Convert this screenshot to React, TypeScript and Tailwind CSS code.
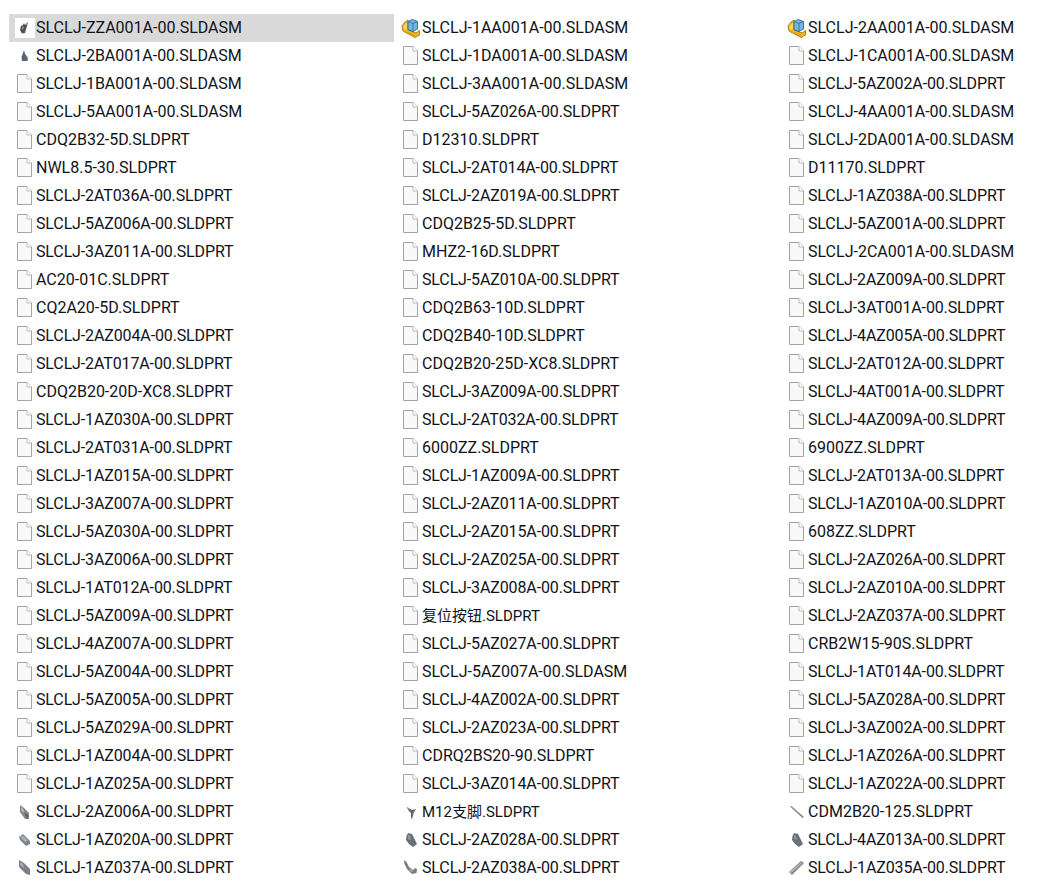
import React from "react"

type IconKind =
  | "page" | "asm" | "top" | "blob" | "clip" | "chip" | "bar" | "bracket" | "rod" | "lump" | "hook" | "pipe"

type FileRow = { name: string; icon?: IconKind }

const PageIcon = () => (
  <svg width="15" height="19" viewBox="0 0 15 19" fill="none" className="mb-[1px] mr-[3px]">
    <path d="M.5.5H10L14.5 5V18.5H.5Z" fill="#f9f9f9" stroke="#a3a3a3" />
    <path d="M10 .5V5H14.5" fill="#ffffff" stroke="#bcbcbc" />
  </svg>
)

const AsmIcon = () => (
  <svg width="20" height="20" viewBox="0 0 20 20" fill="none">
    <path d="M1 8L4 4L7 2V12L15 15L18.5 12.5V17L14 19.5L2 13Z" fill="#f5bb1d" stroke="#8f6c10" strokeWidth="0.8" />
    <path d="M2.5 8.5L6 5V11L3 11.5Z" fill="#fcd766" />
    <path d="M8 14L14 16.5V19L3 13Z" fill="#e2a40e" />
    <path d="M7 3.5L11.5 1.5L16.5 3.5V11L12 13.5L7 11.5Z" fill="#74b6dc" stroke="#2c6a94" strokeWidth="0.9" />
    <path d="M7 3.5L12 5.5L16.5 3.5M12 5.5V13.5" stroke="#2c6a94" strokeWidth="0.8" />
  </svg>
)

const ShapeIcon = ({ kind }: { kind: IconKind }) => {
  const shapes: Record<string, React.ReactNode> = {
    top: (
      <>
        <path d="M6 8L8 7L9 5L10 7L13 4L12 8L11 11L10 15L7 15.5L5 12Z" fill="#4f4f4f" />
        <path d="M7 9L9 8L8.5 11L7 12Z" fill="#8a8a8a" />
        <path d="M11 5.5L12.5 5L11.5 7.5Z" fill="#9a9a9a" />
      </>
    ),
    blob: (
      <>
        <path d="M8 7L9 4L10 8L13 11.5L12.5 15H7L6.5 11Z" fill="#5b626c" />
        <path d="M10.5 10L13 11.5L12.5 13Z" fill="#a9adb2" />
      </>
    ),
    clip: (
      <>
        <path d="M5 3L9 6L14 11V17H10L5 10Z" fill="#83858c" />
        <path d="M6 5L9 8L8.5 11L6 8Z" fill="#b5b7bc" />
        <path d="M10 11L13 13V16L10 14Z" fill="#5c5f66" />
      </>
    ),
    chip: (
      <>
        <path d="M4 7L8 4L15 11V14L11 16L5 10Z" fill="#7f838b" />
        <path d="M5 7L8 5.5L13 10.5L10 12Z" fill="#a9acb2" />
      </>
    ),
    bar: (
      <>
        <path d="M4 2L9 5L15 11V17L11 16L4 9Z" fill="#7d7e88" />
        <path d="M5 4L8 6L9 10L5 7Z" fill="#a9aab2" />
      </>
    ),
    bracket: (
      <>
        <path d="M6 5L11 8L15 7L13 10L11 17L10 16V11L7 8Z" fill="#62686f" />
        <path d="M6 5L9 7L8 8Z" fill="#a6a9ad" />
      </>
    ),
    rod: <path d="M3 4.5L4.5 4L17 15L15.5 16Z" fill="#868b92" />,
    lump: (
      <>
        <path d="M7 3L11 4L14 10L16 14L12 17L8 14L5 10L5.5 6Z" fill="#697079" />
        <path d="M7 5L9 5.5L10 10L7 9Z" fill="#8f959c" />
      </>
    ),
    hook: (
      <>
        <path d="M3 2L5.5 4L8 9L12 12L14 10L16 11L15.5 15L11 16L6 11L3.5 6Z" fill="#7a7c7f" />
        <path d="M9 11L12 13L11 14.5L8 12Z" fill="#a8aaad" />
      </>
    ),
    pipe: (
      <>
        <path d="M2 14L14 3L17 5L5 17Z" fill="#868a90" />
        <path d="M3 14L14 4.5L15 5L4 15Z" fill="#bcbfc3" />
      </>
    ),
  }
  return (
    <svg width="20" height="20" viewBox="0 0 20 20">
      {shapes[kind]}
    </svg>
  )
}

const FileIcon = ({ kind, boxed }: { kind: IconKind; boxed?: boolean }) => {
  if (kind === "page") return <PageIcon />
  if (kind === "asm") return <AsmIcon />
  if (boxed) {
    return (
      <span className="flex h-5 w-5 items-center justify-center bg-white">
        <ShapeIcon kind={kind} />
      </span>
    )
  }
  return <ShapeIcon kind={kind} />
}

const col1: FileRow[] = [
  { name: "SLCLJ-ZZA001A-00.SLDASM", icon: "top" },
  { name: "SLCLJ-2BA001A-00.SLDASM", icon: "blob" },
  { name: "SLCLJ-1BA001A-00.SLDASM" },
  { name: "SLCLJ-5AA001A-00.SLDASM" },
  { name: "CDQ2B32-5D.SLDPRT" },
  { name: "NWL8.5-30.SLDPRT" },
  { name: "SLCLJ-2AT036A-00.SLDPRT" },
  { name: "SLCLJ-5AZ006A-00.SLDPRT" },
  { name: "SLCLJ-3AZ011A-00.SLDPRT" },
  { name: "AC20-01C.SLDPRT" },
  { name: "CQ2A20-5D.SLDPRT" },
  { name: "SLCLJ-2AZ004A-00.SLDPRT" },
  { name: "SLCLJ-2AT017A-00.SLDPRT" },
  { name: "CDQ2B20-20D-XC8.SLDPRT" },
  { name: "SLCLJ-1AZ030A-00.SLDPRT" },
  { name: "SLCLJ-2AT031A-00.SLDPRT" },
  { name: "SLCLJ-1AZ015A-00.SLDPRT" },
  { name: "SLCLJ-3AZ007A-00.SLDPRT" },
  { name: "SLCLJ-5AZ030A-00.SLDPRT" },
  { name: "SLCLJ-3AZ006A-00.SLDPRT" },
  { name: "SLCLJ-1AT012A-00.SLDPRT" },
  { name: "SLCLJ-5AZ009A-00.SLDPRT" },
  { name: "SLCLJ-4AZ007A-00.SLDPRT" },
  { name: "SLCLJ-5AZ004A-00.SLDPRT" },
  { name: "SLCLJ-5AZ005A-00.SLDPRT" },
  { name: "SLCLJ-5AZ029A-00.SLDPRT" },
  { name: "SLCLJ-1AZ004A-00.SLDPRT" },
  { name: "SLCLJ-1AZ025A-00.SLDPRT" },
  { name: "SLCLJ-2AZ006A-00.SLDPRT", icon: "clip" },
  { name: "SLCLJ-1AZ020A-00.SLDPRT", icon: "chip" },
  { name: "SLCLJ-1AZ037A-00.SLDPRT", icon: "bar" },
]

const col2: FileRow[] = [
  { name: "SLCLJ-1AA001A-00.SLDASM", icon: "asm" },
  { name: "SLCLJ-1DA001A-00.SLDASM" },
  { name: "SLCLJ-3AA001A-00.SLDASM" },
  { name: "SLCLJ-5AZ026A-00.SLDPRT" },
  { name: "D12310.SLDPRT" },
  { name: "SLCLJ-2AT014A-00.SLDPRT" },
  { name: "SLCLJ-2AZ019A-00.SLDPRT" },
  { name: "CDQ2B25-5D.SLDPRT" },
  { name: "MHZ2-16D.SLDPRT" },
  { name: "SLCLJ-5AZ010A-00.SLDPRT" },
  { name: "CDQ2B63-10D.SLDPRT" },
  { name: "CDQ2B40-10D.SLDPRT" },
  { name: "CDQ2B20-25D-XC8.SLDPRT" },
  { name: "SLCLJ-3AZ009A-00.SLDPRT" },
  { name: "SLCLJ-2AT032A-00.SLDPRT" },
  { name: "6000ZZ.SLDPRT" },
  { name: "SLCLJ-1AZ009A-00.SLDPRT" },
  { name: "SLCLJ-2AZ011A-00.SLDPRT" },
  { name: "SLCLJ-2AZ015A-00.SLDPRT" },
  { name: "SLCLJ-2AZ025A-00.SLDPRT" },
  { name: "SLCLJ-3AZ008A-00.SLDPRT" },
  { name: "复位按钮.SLDPRT" },
  { name: "SLCLJ-5AZ027A-00.SLDPRT" },
  { name: "SLCLJ-5AZ007A-00.SLDASM" },
  { name: "SLCLJ-4AZ002A-00.SLDPRT" },
  { name: "SLCLJ-2AZ023A-00.SLDPRT" },
  { name: "CDRQ2BS20-90.SLDPRT" },
  { name: "SLCLJ-3AZ014A-00.SLDPRT" },
  { name: "M12支脚.SLDPRT", icon: "bracket" },
  { name: "SLCLJ-2AZ028A-00.SLDPRT", icon: "lump" },
  { name: "SLCLJ-2AZ038A-00.SLDPRT", icon: "hook" },
]

const col3: FileRow[] = [
  { name: "SLCLJ-2AA001A-00.SLDASM", icon: "asm" },
  { name: "SLCLJ-1CA001A-00.SLDASM" },
  { name: "SLCLJ-5AZ002A-00.SLDPRT" },
  { name: "SLCLJ-4AA001A-00.SLDASM" },
  { name: "SLCLJ-2DA001A-00.SLDASM" },
  { name: "D11170.SLDPRT" },
  { name: "SLCLJ-1AZ038A-00.SLDPRT" },
  { name: "SLCLJ-5AZ001A-00.SLDPRT" },
  { name: "SLCLJ-2CA001A-00.SLDASM" },
  { name: "SLCLJ-2AZ009A-00.SLDPRT" },
  { name: "SLCLJ-3AT001A-00.SLDPRT" },
  { name: "SLCLJ-4AZ005A-00.SLDPRT" },
  { name: "SLCLJ-2AT012A-00.SLDPRT" },
  { name: "SLCLJ-4AT001A-00.SLDPRT" },
  { name: "SLCLJ-4AZ009A-00.SLDPRT" },
  { name: "6900ZZ.SLDPRT" },
  { name: "SLCLJ-2AT013A-00.SLDPRT" },
  { name: "SLCLJ-1AZ010A-00.SLDPRT" },
  { name: "608ZZ.SLDPRT" },
  { name: "SLCLJ-2AZ026A-00.SLDPRT" },
  { name: "SLCLJ-2AZ010A-00.SLDPRT" },
  { name: "SLCLJ-2AZ037A-00.SLDPRT" },
  { name: "CRB2W15-90S.SLDPRT" },
  { name: "SLCLJ-1AT014A-00.SLDPRT" },
  { name: "SLCLJ-5AZ028A-00.SLDPRT" },
  { name: "SLCLJ-3AZ002A-00.SLDPRT" },
  { name: "SLCLJ-1AZ026A-00.SLDPRT" },
  { name: "SLCLJ-1AZ022A-00.SLDPRT" },
  { name: "CDM2B20-125.SLDPRT", icon: "rod" },
  { name: "SLCLJ-4AZ013A-00.SLDPRT", icon: "lump" },
  { name: "SLCLJ-1AZ035A-00.SLDPRT", icon: "pipe" },
]

// names with CJK in them sit a bit smaller, long part names run a bit tighter
const nameClass = (name: string) => {
  if (/[^\x00-\x7f]/.test(name)) return "text-[15px]"
  if (name.startsWith("SLCLJ") && name.endsWith("SLDPRT")) return "text-[16px] tracking-[-0.13px]"
  return "text-[16px]"
}

const Row = ({ row, selected }: { row: FileRow; selected?: boolean }) => (
  <div className={selected ? "mr-[1px] flex h-7 items-center bg-[#d9d9d9]" : "flex h-7 items-center"}>
    <span className="flex w-[27px] shrink-0 justify-end pr-[1px]">
      <FileIcon kind={row.icon ?? "page"} boxed={selected} />
    </span>
    <span className={"whitespace-nowrap leading-7 text-[#10121a] " + nameClass(row.name)}>{row.name}</span>
  </div>
)

const App = () => {
  return (
    <div className="flex h-[883px] w-[1052px] overflow-hidden bg-white pl-[9px] pt-[14px] font-['Roboto','Noto_Sans_CJK_SC',sans-serif]">
      {[col1, col2, col3].map((col, c) => (
        <div key={c} className="w-[386px] shrink-0">
          {col.map((row, i) => (
            <Row key={row.name} row={row} selected={c === 0 && i === 0} />
          ))}
        </div>
      ))}
    </div>
  )
}

export default App
